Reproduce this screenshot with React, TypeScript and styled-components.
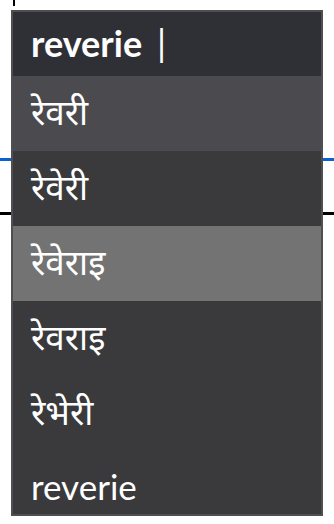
import React from 'react';
import styled, { createGlobalStyle } from 'styled-components';

const GlobalStyle = createGlobalStyle`
  html, body {
    margin: 0;
    padding: 0;
    background: #ffffff;
  }
  body {
    font-family: Lato, "Noto Sans Devanagari", "Noto Sans", sans-serif;
  }
`;

const SUGGESTIONS = ['रेवरी', 'रेवेरी', 'रेवेराइ', 'रेवराइ', 'रेभेरी', 'reverie'];

function App() {
  const hovered = 0;
  const selected = 2;

  return (
    <Page>
      <GlobalStyle />
      <Caret />
      <FocusLine />
      <BaseLine />
      <Dropdown>
        <Header>
          reverie <Bar>|</Bar>
        </Header>
        <List>
          {SUGGESTIONS.map((word, i) => (
            <Option key={word} $state={i === selected ? 'selected' : i === hovered ? 'hover' : 'idle'}>
              {word}
            </Option>
          ))}
        </List>
      </Dropdown>
    </Page>
  );
}

export default App;

const Page = styled.main`
  position: relative;
  width: 334px;
  height: 524px;
  overflow: hidden;
  background: #ffffff;
`;

const Caret = styled.div`
  margin-left: 13px;
  width: 2px;
  height: 6px;
  background: #000000;
`;

const FocusLine = styled.div`
  margin-top: 152px;
  height: 3px;
  background: #0a62cf;
`;

const BaseLine = styled.div`
  margin-top: 51px;
  height: 3px;
  background: #000000;
`;

const Dropdown = styled.div`
  position: absolute;
  top: 10px;
  left: 11px;
  width: 312px;
  height: 506px;
  box-sizing: border-box;
  border: 2px solid #4f4f53;
  background: #3a3a3c;
  display: flex;
  flex-direction: column;
  overflow: hidden;
`;

const Header = styled.div`
  flex: 0 0 64px;
  display: flex;
  align-items: center;
  white-space: pre;
  padding: 0 18px 3px;
  box-sizing: border-box;
  background: #2f2f36;
  color: #ffffff;
  font-size: 36px;
  font-weight: 700;
  line-height: 1;
  word-spacing: 3px;
`;

const Bar = styled.span`
  font-weight: 400;
  margin-left: 3px;
`;

const List = styled.ul`
  margin: 0;
  padding: 0;
  list-style: none;
  display: flex;
  flex-direction: column;
`;

const Option = styled.li<{ $state: 'idle' | 'hover' | 'selected' }>`
  flex: 0 0 75px;
  height: 75px;
  display: flex;
  align-items: center;
  padding: 0 18px 4px;
  box-sizing: border-box;
  color: #ffffff;
  font-size: 35px;
  line-height: 1;
  background: ${({ $state }) =>
    $state === 'selected' ? '#737373' : $state === 'hover' ? '#4b4b4f' : '#3a3a3c'};
`;
